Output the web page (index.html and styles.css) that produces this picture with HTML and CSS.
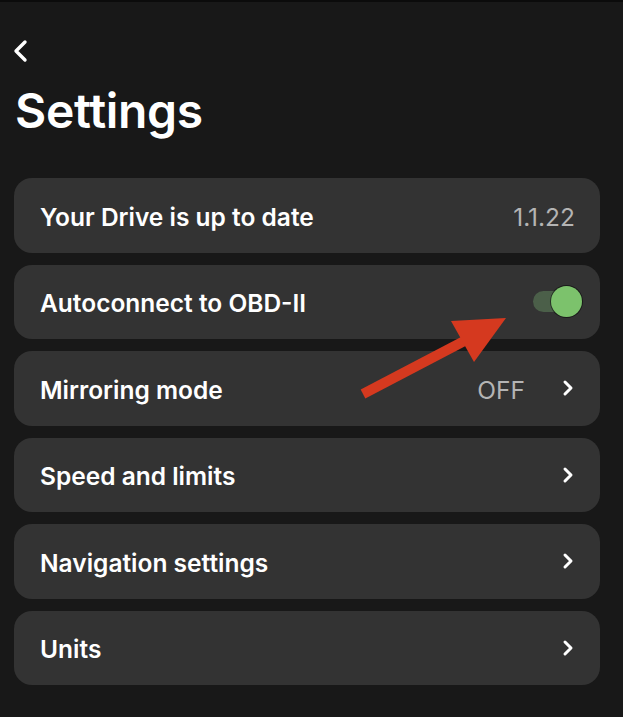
FILE: index.html
```html
<!DOCTYPE html>
<html lang="en">
<head>
  <meta charset="UTF-8" />
  <meta name="viewport" content="width=device-width, initial-scale=1" />
  <title>Settings</title>
  <link rel="stylesheet" href="styles.css">
</head>
<body>
  <div class="screen">
    <button class="back" aria-label="Back">
      <svg width="16" height="24" viewBox="0 0 16 24">
        <path d="M12 3 L3 12 L12 21" fill="none" stroke="#fff" stroke-width="3.4" stroke-linecap="round" stroke-linejoin="round"/>
      </svg>
    </button>

    <h1>Settings</h1>

    <div class="list">
      <div class="row">
        <span class="label">Your Drive is up to date</span>
        <span class="value version">1.1.22</span>
      </div>

      <div class="row">
        <span class="label">Autoconnect to OBD-II</span>
        <span class="toggle on"><span class="knob"></span></span>
      </div>

      <div class="row">
        <span class="label">Mirroring mode</span>
        <span class="value">OFF</span>
        <svg class="chevron" width="12" height="18" viewBox="0 0 12 18">
          <path d="M3 3 L9 9 L3 15" fill="none" stroke="#fff" stroke-width="3" stroke-linecap="round" stroke-linejoin="round"/>
        </svg>
      </div>

      <div class="row">
        <span class="label">Speed and limits</span>
        <svg class="chevron" width="12" height="18" viewBox="0 0 12 18">
          <path d="M3 3 L9 9 L3 15" fill="none" stroke="#fff" stroke-width="3" stroke-linecap="round" stroke-linejoin="round"/>
        </svg>
      </div>

      <div class="row">
        <span class="label">Navigation settings</span>
        <svg class="chevron" width="12" height="18" viewBox="0 0 12 18">
          <path d="M3 3 L9 9 L3 15" fill="none" stroke="#fff" stroke-width="3" stroke-linecap="round" stroke-linejoin="round"/>
        </svg>
      </div>

      <div class="row">
        <span class="label">Units</span>
        <svg class="chevron" width="12" height="18" viewBox="0 0 12 18">
          <path d="M3 3 L9 9 L3 15" fill="none" stroke="#fff" stroke-width="3" stroke-linecap="round" stroke-linejoin="round"/>
        </svg>
      </div>
    </div>

    <!-- annotation arrow pointing at the toggle -->
    <svg class="annotation" width="623" height="717" viewBox="0 0 623 717">
      <line x1="363" y1="394" x2="470" y2="338" stroke="#d5391f" stroke-width="10"/>
      <polygon points="506,318 451,321 474,362" fill="#d5391f"/>
    </svg>
  </div>
</body>
</html>
```

FILE: styles.css
```css
:root {
  --background: #181818;
  --card: #333333;
  --text: #ffffff;
  --muted: #b4b4b4;
  --toggle-track: #4b5f49;
  --toggle-knob: #7cc26c;
}

* {
  box-sizing: border-box;
}

body {
  margin: 0;
  background-color: var(--background);
  font-family: Inter, 'Noto Sans', sans-serif;
  color: var(--text);
}

.screen {
  position: relative;
  height: 717px;
  padding: 0 23px 0 14px;
  border-top: 2px solid #0b0b0b;
  overflow: hidden;
}

.back {
  display: block;
  margin: 37px 0 0 -1px;
  padding: 0;
  width: 16px;
  height: 24px;
  border: none;
  background: none;
  cursor: pointer;
}

.back svg {
  display: block;
}

h1 {
  margin: 19px 0 0 1px;
  font-size: 48px;
  font-weight: 600;
  line-height: 58px;
  letter-spacing: -0.3px;
}

.list {
  display: flex;
  flex-direction: column;
  gap: 12px;
  margin-top: 38px;
}

.row {
  display: flex;
  align-items: center;
  height: 74.5px;
  padding: 3px 28px 0 26px;
  background-color: var(--card);
  border-radius: 18px;
}

.label {
  flex: 1;
  font-size: 24.5px;
  font-weight: 600;
}

.value {
  font-size: 24.5px;
  font-weight: 400;
  color: var(--muted);
  margin-right: 37px;
}

.version {
  margin-right: -3px;
}

.chevron {
  display: block;
  margin-right: -2px;
  margin-top: -3px;
}

.toggle {
  position: relative;
  width: 49px;
  height: 31px;
  margin-right: -10px;
  margin-top: -3px;
}

.toggle::before {
  content: "";
  position: absolute;
  left: 0;
  top: 5px;
  width: 40px;
  height: 21px;
  border-radius: 11px;
  background-color: var(--toggle-track);
}

.knob {
  position: absolute;
  right: 0;
  top: 0;
  width: 31px;
  height: 31px;
  border-radius: 50%;
  background-color: var(--toggle-knob);
  box-shadow: 0 0 0 1px rgba(0, 0, 0, 0.5);
}

.annotation {
  position: absolute;
  left: 0;
  top: -2px;
  pointer-events: none;
}
```
